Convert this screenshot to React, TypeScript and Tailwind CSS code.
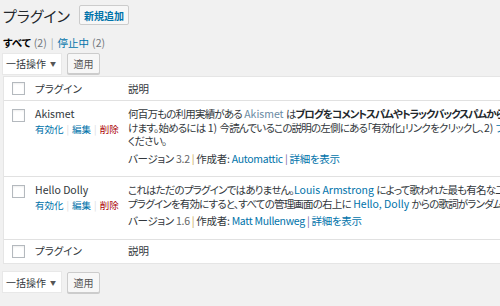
const font = "font-['Noto_Sans_CJK_JP',sans-serif]";
const palt = "[font-feature-settings:'palt']";

function Checkbox() {
  return <div className="w-[13px] h-[13px] shrink-0 border border-[#b4b9be] bg-white shadow-[inset_0_1px_2px_rgba(0,0,0,0.07)]" />;
}

function BulkActions() {
  return (
    <div className="flex items-center gap-[6px]">
      <div className="w-[58px] h-[20px] shrink-0 bg-white flex items-center pl-[3px] pr-[5px] justify-between whitespace-nowrap text-[10px] text-[#32373c] shadow-[0_0_0_1px_#e8e8e8]">
        <span>一括操作</span>
        <span className="text-[6px] text-[#555]">▼</span>
      </div>
      <div className="w-[33px] h-[21px] shrink-0 bg-[#f7f7f7] border border-[#ccc] rounded-[2px] flex items-center justify-center text-[10px] text-[#555] shadow-[0_1px_0_#ccc]">
        適用
      </div>
    </div>
  );
}

function HeaderRow({ top }: { top?: boolean }) {
  return (
    <div className={`flex items-center h-[24px] ${top ? 'border-b' : 'border-t'} border-[#e1e1e1] text-[10.5px] text-[#32373c] ${palt}`}>
      <div className="w-[31px] shrink-0 pl-[8px]"><Checkbox /></div>
      <div className="w-[93px] shrink-0">プラグイン</div>
      <div>説明</div>
    </div>
  );
}

const en = 'tracking-normal';

const plugins = [
  {
    name: 'Akismet',
    desc: [
      <>何百万もの利用実績がある<span className={en}> </span><span className={`text-[#6a8aa3] ${en}`}>Akismet </span>は<span className="font-bold text-[#23282d] tracking-[-1px]">ブログをコメントスパムやトラックバックスパムから守る最も優れた方法</span>といえるでしょう。Akismet はあなたが寝ている間もサイトを守り続</>,
      <>けます。始めるには<span className={en}> 1) </span>今読んでいるこの説明の左側にある「有効化」リンクをクリックし、<span className={en}>2) </span><span className="text-[#0073aa]">プランに申し込んで API キーを取得し</span>、3) 設定ページで API キーを設定して</>,
      <>ください。</>,
    ],
    version: '3.2',
    author: 'Automattic',
  },
  {
    name: 'Hello Dolly',
    desc: [
      <>これはただのプラグインではありません。<span className={`text-[#0073aa] ${en}`}>Louis Armstrong </span>によって歌われた最も有名な二つの単語に要約された、同一世代のすべての人々の希望と情熱を象徴するものです。この</>,
      <>プラグインを有効にすると、すべての管理画面の右上に<span className={en}> </span><span className={`text-[#0073aa] ${en}`}>Hello, Dolly </span>からの歌詞がランダムに表示されます。</>,
    ],
    version: '1.6',
    author: 'Matt Mullenweg',
  },
];

export default function App() {
  return (
    <div className={`w-[500px] h-[306px] overflow-hidden bg-[#f1f1f1] pl-[3px] ${font}`}>
      {/* Title */}
      <div className="flex items-center h-[20px] mt-[5px]">
        <h1 className={`text-[15px] text-[#23282d] leading-none ${palt}`}>プラグイン</h1>
        <div className="ml-[9px] h-[20px] w-[50px] bg-[#f7f7f7] border border-[#ccc] rounded-[2px] flex items-center justify-center text-[10px] font-bold text-[#0073aa]">
          新規追加
        </div>
      </div>

      {/* Filters */}
      <div className={`mt-[10px] h-[16px] flex items-center text-[10.5px] leading-none ${palt}`}>
        <span className="font-bold text-black">すべて</span>
        <span className="ml-[3px] text-[#72777c]">(2)</span>
        <span className="mx-[4px] text-[#a0a5aa]">|</span>
        <span className="text-[#0073aa]">停止中</span>
        <span className="ml-[3px] text-[#72777c]">(2)</span>
      </div>

      <div className="mt-[2px]">
        <BulkActions />
      </div>

      {/* Table */}
      <div className="mt-[2px] w-[640px] bg-white border border-[#e5e5e5]">
        <HeaderRow top />
        {plugins.map((p, i) => (
          <div key={p.name} className={`flex pt-[6px] pb-[11px] ${i > 0 ? 'border-t border-[#e1e1e1]' : ''} text-[10.5px] leading-[13.5px] ${palt}`}>
            <div className="w-[31px] shrink-0 pl-[8px] pt-[2px]"><Checkbox /></div>
            <div className="w-[93px] shrink-0">
              <div className="text-[#32373c]">{p.name}</div>
              <div className="mt-[2px] text-[9.5px] whitespace-nowrap">
                <span className="text-[#0073aa]">有効化</span>
                <span className="mx-[3px] text-[#ddd]">|</span>
                <span className="text-[#0073aa]">編集</span>
                <span className="mx-[3px] text-[#ddd]">|</span>
                <span className="text-[#a00]">削除</span>
              </div>
            </div>
            <div className="flex-1 min-w-0 overflow-hidden text-[#32373c] whitespace-nowrap tracking-[-0.8px]">
              {p.desc.map((line, j) => (
                <div key={j}>{line}</div>
              ))}
              <div className="mt-[4px] tracking-[-0.3px]">
                バージョン <span className="text-[#666]">{p.version}</span>{' '}
                <span className="text-[#c9a24b]">|</span> 作成者: <span className="text-[#0073aa]">{p.author}</span>{' '}
                <span className="text-[#7a6aa0]">|</span> <span className="text-[#0073aa]">詳細を表示</span>
              </div>
            </div>
          </div>
        ))}
        <HeaderRow />
      </div>

      <div className="mt-[8px]">
        <BulkActions />
      </div>
    </div>
  );
}
